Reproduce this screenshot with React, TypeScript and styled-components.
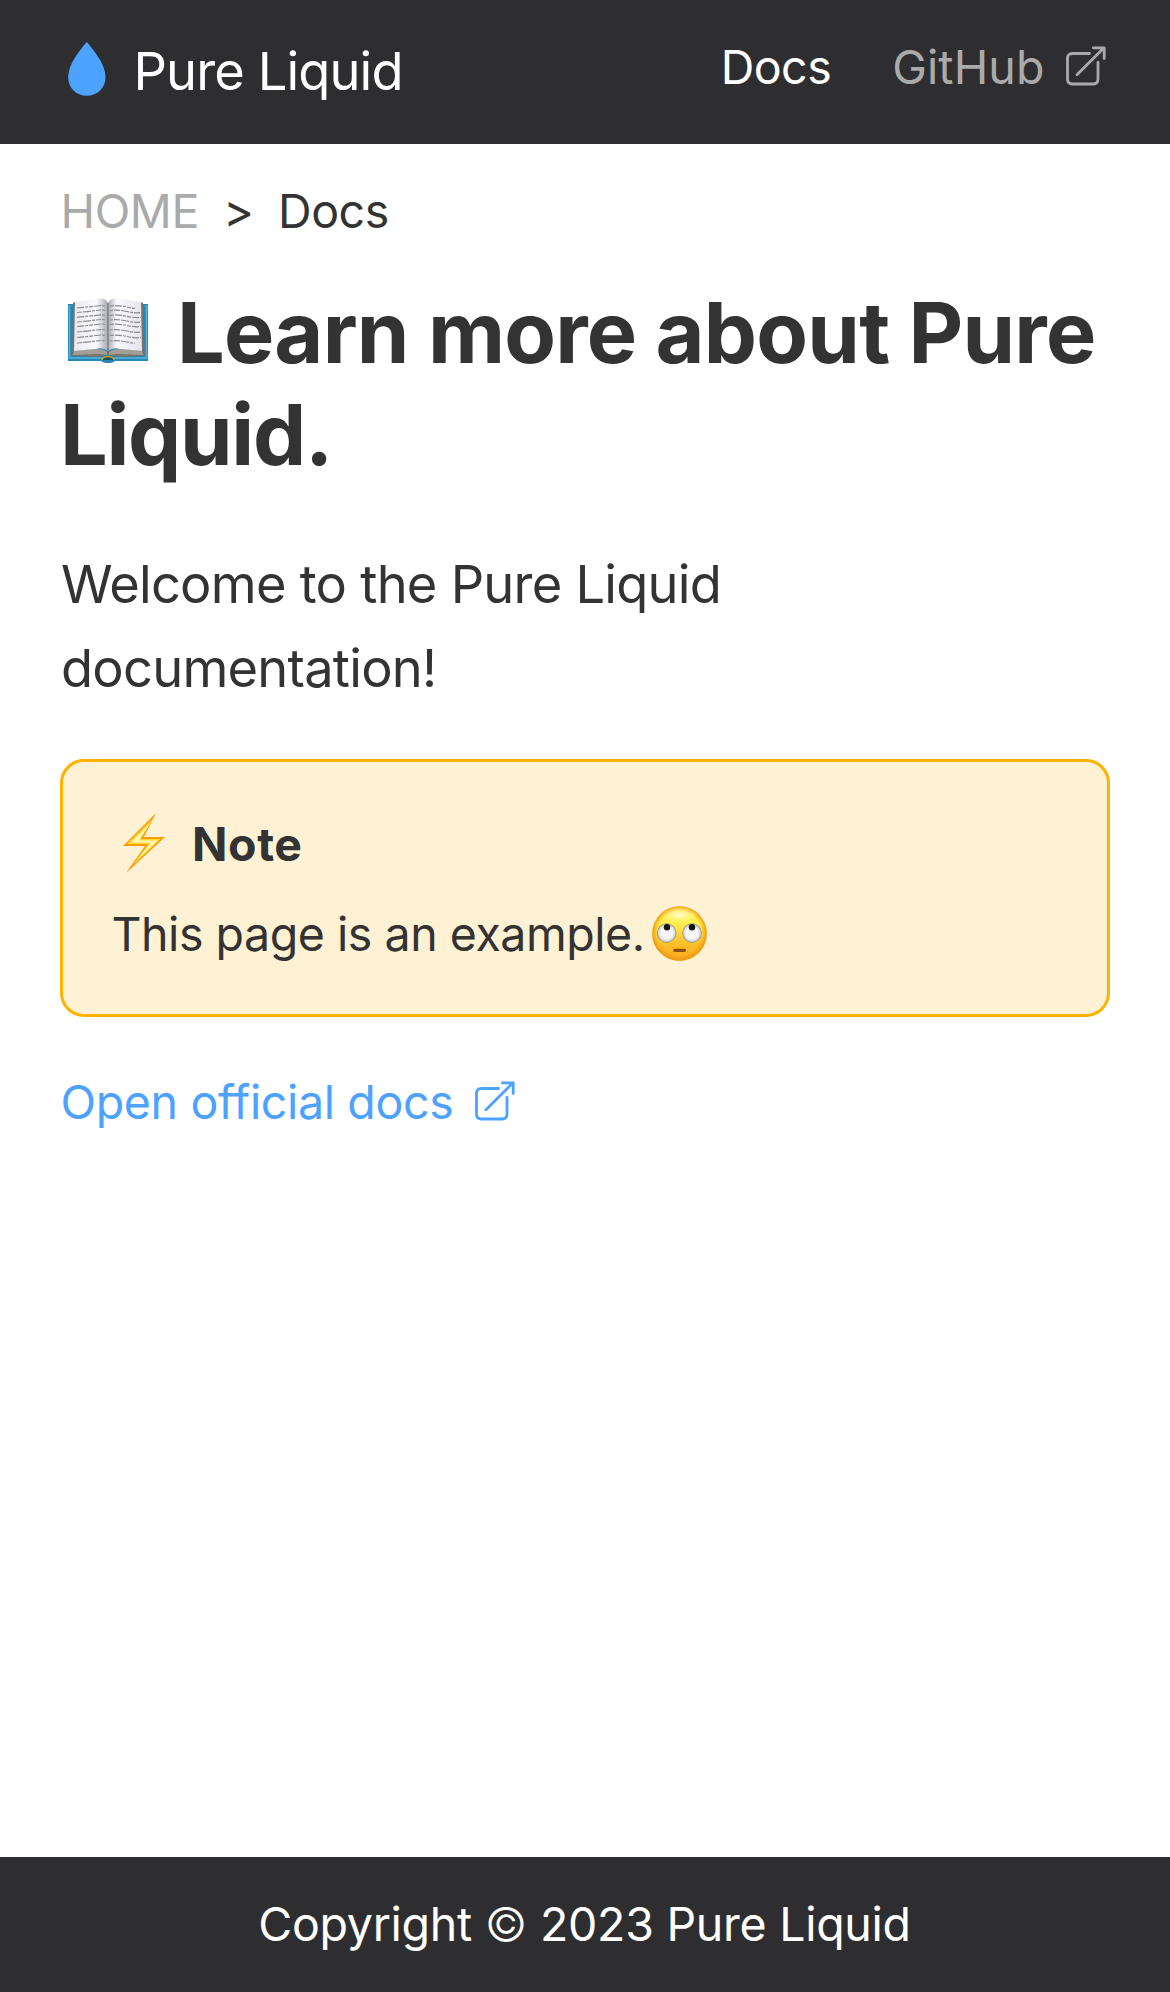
import React from "react";
import styled, { createGlobalStyle } from "styled-components";

const colors = {
  dark: "#2e2e30",
  text: "#333333",
  muted: "#aaaaaa",
  accent: "#4da1ff",
  white: "#ffffff",
  noteBorder: "#ffb300",
  noteFill: "#fff2d4",
};

const GlobalStyle = createGlobalStyle`
  * { box-sizing: border-box; }
  body {
    margin: 0;
    background: ${colors.white};
    color: ${colors.text};
    font-family: Inter, "Liberation Sans", sans-serif;
    font-size: 46.5px;
    line-height: 60px;
  }
  svg { display: block; flex: none; }
`;

const Page = styled.div`
  display: flex;
  flex-direction: column;
  min-height: 1992px;
`;

const Header = styled.header`
  display: flex;
  align-items: flex-start;
  justify-content: space-between;
  height: 144px;
  padding: 37px 64px 0 68px;
  background: ${colors.dark};
`;

const Brand = styled.a`
  display: flex;
  gap: 27.5px;
  padding-top: 4px;
  color: ${colors.white};
  font-size: 52.4px;
  letter-spacing: -0.87px;
  text-decoration: none;
`;

const DropIcon = styled.svg`
  width: 38px;
  height: 54px;
  margin-top: 1px;
`;

const Nav = styled.nav`
  display: flex;
  gap: 61px;
`;

const NavLink = styled.a<{ $muted?: boolean }>`
  display: flex;
  color: ${(p) => (p.$muted ? colors.muted : colors.white)};
  letter-spacing: ${(p) => (p.$muted ? "0.1px" : "-0.5px")};
  text-decoration: none;
`;

const OpenIcon = styled.svg<{ $top: number; $left: number }>`
  width: 40px;
  height: 40px;
  margin-top: ${(p) => p.$top}px;
  margin-left: ${(p) => p.$left}px;
  fill: none;
  stroke: currentColor;
  stroke-width: 2.8;
  stroke-linecap: round;
  stroke-linejoin: round;
`;

const Main = styled.main`
  flex: 1;
  padding: 37px 60px 0;
`;

const Breadcrumbs = styled.div`
  display: flex;
  padding-left: 0.5px;
  letter-spacing: -0.4px;
`;

const Crumb = styled.span<{ $muted?: boolean }>`
  color: ${(p) => (p.$muted ? colors.muted : colors.text)};
`;

const Separator = styled.span`
  width: 79px;
  text-align: center;
`;

const Title = styled.h1`
  margin: 40px 0 0;
  font-size: 84.5px;
  font-weight: 700;
  line-height: 102px;
  letter-spacing: -0.79px;
  white-space: nowrap;
`;

const TitleEnd = styled.span`
  letter-spacing: -1.3px;
`;

const BookIcon = styled.svg`
  && { display: inline-block; }
  width: 80px;
  height: 65px;
  margin: 0 29px 0 8px;
  vertical-align: baseline;
`;

const Intro = styled.p`
  margin: 57px 0 49px;
  padding-left: 1px;
  font-size: 52.4px;
  line-height: 84px;
  letter-spacing: -0.75px;
`;

const Note = styled.section`
  display: flex;
  flex-direction: column;
  gap: 30px;
  height: 258px;
  padding: 52px 48px;
  border: 3px solid ${colors.noteBorder};
  border-radius: 24px;
  background: ${colors.noteFill};
`;

const NoteTitle = styled.div`
  display: flex;
  gap: 27px;
  padding-left: 12px;
  font-weight: 700;
  letter-spacing: 0.6px;
`;

const BoltIcon = styled.svg`
  width: 42px;
  height: 60px;
  margin-top: -1px;
`;

const NoteText = styled.div`
  display: flex;
  padding-left: 0.5px;
  letter-spacing: -0.46px;
`;

const FaceIcon = styled.svg`
  width: 55px;
  height: 55px;
  margin: 1.5px 0 0 7.5px;
`;

const DocsLink = styled.a`
  display: flex;
  margin-top: 55px;
  padding-left: 0.5px;
  color: ${colors.accent};
  letter-spacing: -0.35px;
  text-decoration: none;
`;

const Footer = styled.footer`
  height: 135px;
  padding: 37px 1px 0 0;
  background: ${colors.dark};
  color: ${colors.white};
  letter-spacing: -0.27px;
  text-align: center;
`;

const CopyrightSign = styled.span`
  font-weight: 300;
`;

function ExternalIcon({ top, left }: { top: number; left: number }) {
  return (
    <OpenIcon $top={top} $left={left} viewBox="0 0 40 40">
      <path d="M23.5 7.5H6.5Q1.5 7.5 1.5 12.5V33Q1.5 38 6.5 38H27Q32 38 32 33V16.5" />
      <path d="M11 28.8L38 1.8M27.3 1.8H38.2V12.5" />
    </OpenIcon>
  );
}

const pageLines = [8, 12.5, 17.3, 22, 26.5, 32, 37.5, 43];

function Book() {
  return (
    <BookIcon viewBox="0 0 80 65">
      <defs>
        <linearGradient id="pageLeft">
          <stop offset="0" stopColor="#e8e8ee" />
          <stop offset=".65" stopColor="#fbfbff" />
          <stop offset="1" stopColor="#a9a9b2" />
        </linearGradient>
        <linearGradient id="pageRight">
          <stop offset="0" stopColor="#aaaab2" />
          <stop offset=".25" stopColor="#f8f8fd" />
          <stop offset="1" stopColor="#e4e4eb" />
        </linearGradient>
      </defs>
      <path d="M0 6H80V63H47Q45 65 40 65Q35 65 33 63H0Z" fill="#2787b5" />
      <path d="M1.5 7V60H78.5V7" fill="none" stroke="#52b4dd" strokeWidth="1.5" />
      <path d="M5 5L7 4V53L30 51L40 54L50 51L73 53V4L75 5L77 58L49 59Q46 57 40 57Q34 57 31 59L4 58Z" fill="#77736b" />
      <path d="M6 53L29 51Q36 51 39 54V57L31 56L5 57ZM74 53L51 51Q44 51 41 54V57L49 56L75 57Z" fill="#a29e96" />
      <path d="M7 4C18 3 29-1 36 1Q39 2 40 5V53Q35 49 28 51L6 53Z" fill="url(#pageLeft)" />
      <path d="M73 4C62 3 51-1 44 1Q41 2 40 5V53Q45 49 52 51L74 53Z" fill="url(#pageRight)" />
      <path d="M40 5V54" stroke="#74747c" strokeWidth="1.2" />
      {pageLines.map((y, i) => (
        <g key={y} fill="none" stroke="#8b8b93" strokeWidth="1.2">
          <path d={`M9 ${y + 2}Q20 ${y + 1} 28 ${y}T37 ${y}`} strokeDasharray={i % 2 ? "5 1 8 1 3 1" : "7 1 3 1 4 1"} />
          <path d={`M42 ${y}Q50 ${y - 1} 59 ${y + 1}T${i === 0 || i === 7 ? 66 : 73} ${y + 2}`} strokeDasharray={i % 2 ? "3 1 6 1 8 1" : "4 1 7 1 3 1"} />
        </g>
      ))}
      <path d="M34 62Q35 58.5 40 58.5Q45 58.5 46 62" fill="#17516b" stroke="#c39c16" strokeWidth="1.6" />
    </BookIcon>
  );
}

function Bolt() {
  return (
    <BoltIcon viewBox="0 0 42 60">
      <defs>
        <linearGradient id="boltEdge" x1="0" y1="0" x2="0" y2="1">
          <stop offset="0" stopColor="#f5a70a" />
          <stop offset=".45" stopColor="#ff9d00" />
          <stop offset="1" stopColor="#ff9500" />
        </linearGradient>
      </defs>
      <path d="M33 0L0 33H22L3 60L42 24H21Z" fill="url(#boltEdge)" />
      <path d="M29.5 6L4 31H25.5L9 53L37.5 26H17.5Z" fill="#ffd83b" />
      <path d="M26.5 11L8 29.5H28L13 48L34.5 27.5H16Z" fill="#fff9b5" />
    </BoltIcon>
  );
}

function Face() {
  return (
    <FaceIcon viewBox="0 0 55 55">
      <defs>
        <linearGradient id="skin" x1="0" y1="0" x2="0" y2="1">
          <stop offset="0" stopColor="#ffe95c" />
          <stop offset=".3" stopColor="#fff04c" />
          <stop offset=".65" stopColor="#fcc52b" />
          <stop offset="1" stopColor="#f8a51b" />
        </linearGradient>
        <radialGradient id="rim">
          <stop offset=".8" stopColor="#f39a12" stopOpacity="0" />
          <stop offset="1" stopColor="#ee930f" stopOpacity=".9" />
        </radialGradient>
        <radialGradient id="shine">
          <stop offset="0" stopColor="#fffff0" stopOpacity=".9" />
          <stop offset="1" stopColor="#fff56a" stopOpacity="0" />
        </radialGradient>
        <radialGradient id="eyeball">
          <stop offset=".6" stopColor="#f6f6f6" />
          <stop offset=".85" stopColor="#d4d5da" />
          <stop offset="1" stopColor="#857f76" />
        </radialGradient>
      </defs>
      <circle cx="27.5" cy="27.5" r="27.3" fill="url(#skin)" />
      <circle cx="27.5" cy="27.5" r="27.3" fill="url(#rim)" />
      <ellipse cx="27.5" cy="9" rx="19" ry="9" fill="url(#shine)" />
      <circle cx="14.7" cy="27" r="9.7" fill="url(#eyeball)" />
      <circle cx="40" cy="27" r="9.7" fill="url(#eyeball)" />
      <circle cx="15" cy="21.3" r="3.2" fill="#17130f" />
      <circle cx="40" cy="21.3" r="3.2" fill="#17130f" />
      <rect x="21.3" y="42.7" width="12.7" height="3.2" rx="1.4" fill="#915013" />
    </FaceIcon>
  );
}

export default function App() {
  return (
    <Page>
      <GlobalStyle />
      <Header>
        <Brand>
          <DropIcon viewBox="0 0 38 54">
            <path d="M18.8 0Q20 1.2 26 9C33 18.5 37.5 27 37.5 35.3C37.5 46 29.5 53.8 18.8 53.8S.2 46 .2 35.3C.2 27 4.5 18.5 11.5 9Q17.5 1.2 18.8 0Z" fill={colors.accent} />
          </DropIcon>
          Pure Liquid
        </Brand>
        <Nav>
          <NavLink>Docs</NavLink>
          <NavLink $muted>
            GitHub
            <ExternalIcon top={9} left={21.5} />
          </NavLink>
        </Nav>
      </Header>
      <Main>
        <Breadcrumbs>
          <Crumb $muted>HOME</Crumb>
          <Separator>&gt;</Separator>
          <Crumb>Docs</Crumb>
        </Breadcrumbs>
        <Title>
          <Book />Learn more about Pure
          <br />
          <TitleEnd>Liquid.</TitleEnd>
        </Title>
        <Intro>
          Welcome to the Pure Liquid
          <br />
          documentation!
        </Intro>
        <Note>
          <NoteTitle>
            <Bolt />
            Note
          </NoteTitle>
          <NoteText>
            This page is an example.
            <Face />
          </NoteText>
        </Note>
        <DocsLink>
          Open official docs
          <ExternalIcon top={9} left={22} />
        </DocsLink>
      </Main>
      <Footer>
        Copyright <CopyrightSign>©</CopyrightSign> 2023 Pure Liquid
      </Footer>
    </Page>
  );
}
